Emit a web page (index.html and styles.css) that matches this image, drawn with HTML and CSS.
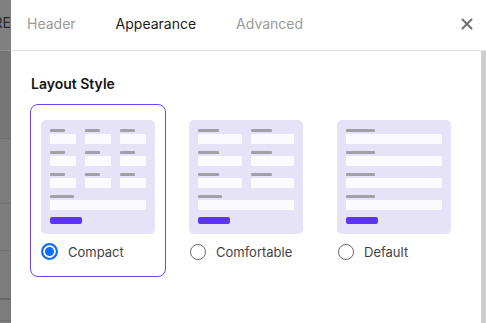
FILE: index.html
```html
<!DOCTYPE html>
<html lang="en">
<head>
  <meta charset="UTF-8" />
  <meta name="viewport" content="width=device-width, initial-scale=1.0"/>
  <title>Form Settings - Appearance</title>
  <link rel="stylesheet" href="styles.css">
</head>
<body>

  <div class="backdrop">
    <div class="backdrop-top"><span>RE</span></div>
    <div class="backdrop-row dark"></div>
    <div class="backdrop-row"></div>
    <div class="backdrop-row short"></div>
    <div class="backdrop-row double"></div>
    <div class="backdrop-row rest"></div>
  </div>

  <div class="dialog">
    <div class="dialog-header">
      <nav class="tabs">
        <span class="tab">Header</span>
        <span class="tab active">Appearance</span>
        <span class="tab">Advanced</span>
      </nav>
      <button class="close" aria-label="Close">
        <svg width="12" height="12" viewBox="0 0 12 12">
          <path d="M1.5 1.5 L10.5 10.5 M10.5 1.5 L1.5 10.5" stroke="#6f6f6f" stroke-width="2" stroke-linecap="round"/>
        </svg>
      </button>
    </div>

    <div class="dialog-body">
      <div class="content">
        <h3 class="section-title">Layout Style</h3>

        <div class="layout-options">
          <!-- compact: three columns -->
          <label class="option selected">
            <div class="preview">
              <div class="grid cols-3">
                <div class="field"><i class="lbl w15"></i><b></b></div>
                <div class="field"><i class="lbl w15"></i><b></b></div>
                <div class="field"><i class="lbl w15"></i><b></b></div>
                <div class="field"><i class="lbl w15"></i><b></b></div>
                <div class="field"><i class="lbl w15"></i><b></b></div>
                <div class="field"><i class="lbl w15"></i><b></b></div>
                <div class="field"><i class="lbl w15"></i><b></b></div>
                <div class="field"><i class="lbl w15"></i><b></b></div>
                <div class="field"><i class="lbl w15"></i><b></b></div>
                <div class="field full"><i class="lbl w24"></i><b></b></div>
              </div>
              <div class="btn"></div>
            </div>
            <div class="choice">
              <span class="radio checked"></span>
              <span class="choice-text">Compact</span>
            </div>
          </label>

          <!-- comfortable: two columns -->
          <label class="option">
            <div class="preview">
              <div class="grid cols-2">
                <div class="field"><i class="lbl w21"></i><b></b></div>
                <div class="field"><i class="lbl w21"></i><b></b></div>
                <div class="field"><i class="lbl w21"></i><b></b></div>
                <div class="field"><i class="lbl w21"></i><b></b></div>
                <div class="field"><i class="lbl w21"></i><b></b></div>
                <div class="field"><i class="lbl w21"></i><b></b></div>
                <div class="field full"><i class="lbl w24"></i><b></b></div>
              </div>
              <div class="btn"></div>
            </div>
            <div class="choice">
              <span class="radio"></span>
              <span class="choice-text">Comfortable</span>
            </div>
          </label>

          <!-- default: single column -->
          <label class="option">
            <div class="preview">
              <div class="grid">
                <div class="field"><i class="lbl w29"></i><b></b></div>
                <div class="field"><i class="lbl w29"></i><b></b></div>
                <div class="field"><i class="lbl w29"></i><b></b></div>
                <div class="field"><i class="lbl w29"></i><b></b></div>
              </div>
              <div class="btn"></div>
            </div>
            <div class="choice">
              <span class="radio"></span>
              <span class="choice-text">Default</span>
            </div>
          </label>
        </div>
      </div>
      <div class="scrollbar"></div>
    </div>
  </div>

</body>
</html>
```

FILE: styles.css
```css
html, body {
  height: 100%;
}

body {
  margin: 0;
  display: flex;
  font-family: Inter, 'Noto Sans', sans-serif;
  background-color: #ffffff;
  overflow: hidden;
}

/* page behind the dialog, dimmed */
.backdrop {
  width: 11px;
  flex-shrink: 0;
  display: flex;
  flex-direction: column;
  background-color: #7c7c7c;
  overflow: hidden;
}

.backdrop-top {
  height: 51px;
  flex-shrink: 0;
  display: flex;
  justify-content: flex-end;
  align-items: center;
  padding-bottom: 5px;
  box-sizing: border-box;
  background-color: #808080;
  border-bottom: 1px solid #909090;
  font-size: 14px;
  color: #2a2a2a;
  white-space: nowrap;
}

.backdrop-row {
  height: 64px;
  flex-shrink: 0;
  border-bottom: 1px solid #6e6e6e;
}

.backdrop-row.dark {
  height: 87px;
  background-color: #767676;
}

.backdrop-row.short {
  height: 46px;
}

.backdrop-row.double {
  height: 47px;
  border-bottom: 2px solid #666666;
}

.backdrop-row.rest {
  height: 20px;
}

.dialog {
  flex: 1;
  display: flex;
  flex-direction: column;
  background-color: #ffffff;
}

.dialog-header {
  height: 51px;
  flex-shrink: 0;
  display: flex;
  align-items: center;
  justify-content: space-between;
  padding: 0 12px 3px 16px;
  box-sizing: border-box;
  border-bottom: 1px solid #e4e4e4;
}

.tabs {
  display: flex;
  gap: 40px;
}

.tab {
  font-size: 14px;
  color: #9a9a9a;
}

.tab.active {
  color: #1c1c1c;
}

.close {
  background: none;
  border: none;
  padding: 0;
  width: 14px;
  height: 14px;
  display: flex;
  align-items: center;
  justify-content: center;
  cursor: pointer;
}

.dialog-body {
  flex: 1;
  display: flex;
}

.content {
  flex: 1;
  padding: 0 19px;
}

.scrollbar {
  width: 5px;
  background-color: #cdcdcd;
}

.section-title {
  margin: 24px 0 12px 1px;
  font-size: 14px;
  font-weight: 600;
  color: #141414;
  line-height: 17px;
}

.layout-options {
  display: flex;
  gap: 12px;
}

.option {
  width: 136px;
  box-sizing: border-box;
  border: 1px solid transparent;
  border-radius: 8px;
  padding: 15px 10px 16px 10px;
  cursor: pointer;
}

.option.selected {
  border-color: #6a45f0;
}

.preview {
  height: 114px;
  box-sizing: border-box;
  background-color: #e6e2f8;
  border-radius: 5px;
  padding: 9px 9px 0 9px;
}

.grid {
  display: grid;
  grid-template-columns: 1fr;
  column-gap: 9px;
  row-gap: 7px;
}

.grid.cols-3 {
  grid-template-columns: repeat(3, 1fr);
}

.grid.cols-2 {
  grid-template-columns: repeat(2, 1fr);
}

.field.full {
  grid-column: 1 / -1;
}

.field i {
  display: block;
  height: 3px;
  background-color: #a29fab;
  border-radius: 1px;
  margin-bottom: 2px;
}

.field b {
  display: block;
  height: 10px;
  background-color: #fbfbfe;
  border-radius: 1px;
}

.lbl.w15 { width: 15px; }
.lbl.w21 { width: 21px; }
.lbl.w24 { width: 24px; }
.lbl.w29 { width: 29px; }

.btn {
  width: 32px;
  height: 7px;
  margin-top: 7px;
  background-color: #5b35f2;
  border-radius: 2px;
}

.choice {
  display: flex;
  align-items: center;
  margin-top: 9px;
  height: 17px;
}

.radio {
  width: 16px;
  height: 16px;
  box-sizing: border-box;
  border: 1px solid #6a6a6a;
  border-radius: 50%;
  margin-left: 1px;
  flex-shrink: 0;
}

.radio.checked {
  border: 2px solid #0d6efd;
  background-color: #0d6efd;
  box-shadow: inset 0 0 0 2px #ffffff;
  width: 17px;
  height: 17px;
  margin-left: 0;
}

.choice-text {
  margin-left: 10px;
  font-size: 13px;
  color: #444;
}
```
